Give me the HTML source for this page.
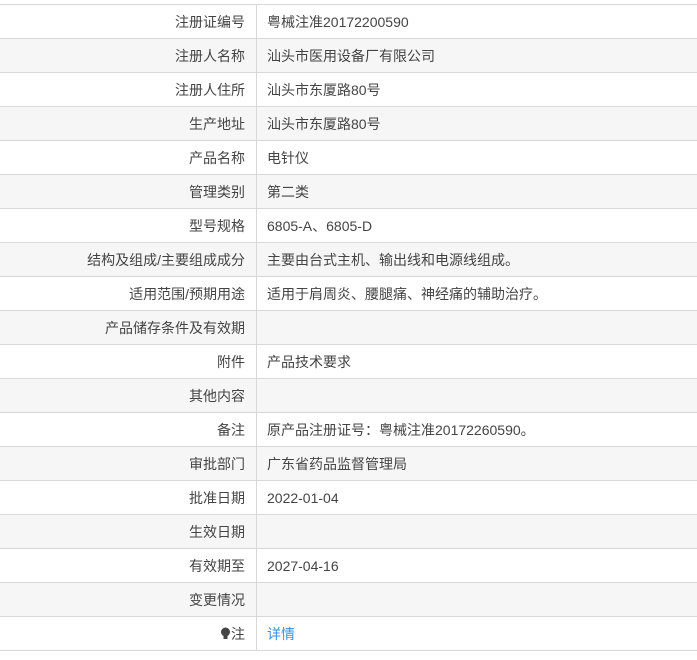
<!DOCTYPE html><html><head><meta charset="utf-8"><style>
body{margin:0;width:697px;height:660px;background:#fff;overflow:hidden;font-family:"Liberation Sans","Noto Sans CJK SC",sans-serif;font-size:14px;color:#444}
.r{position:absolute;left:0;width:697px;height:33px;border-top:1px solid #d8d8d8;line-height:35px}
.r.g{background:#f6f6f6}
.l{position:absolute;left:0;width:245px;text-align:right}
.v{position:absolute;left:267px}
.s{position:absolute;left:256px;top:0;width:1px;height:33px;background:#d8d8d8}
a{color:#3a8ee6;text-decoration:none}
</style></head><body>
<div class="r" style="top:4px"><div class="s"></div><div class="l">注册证编号</div><div class="v">粤械注准20172200590</div></div>
<div class="r g" style="top:38px"><div class="s"></div><div class="l">注册人名称</div><div class="v">汕头市医用设备厂有限公司</div></div>
<div class="r" style="top:72px"><div class="s"></div><div class="l">注册人住所</div><div class="v">汕头市东厦路80号</div></div>
<div class="r g" style="top:106px"><div class="s"></div><div class="l">生产地址</div><div class="v">汕头市东厦路80号</div></div>
<div class="r" style="top:140px"><div class="s"></div><div class="l">产品名称</div><div class="v">电针仪</div></div>
<div class="r g" style="top:174px"><div class="s"></div><div class="l">管理类别</div><div class="v">第二类</div></div>
<div class="r" style="top:208px"><div class="s"></div><div class="l">型号规格</div><div class="v">6805-A、6805-D</div></div>
<div class="r g" style="top:242px"><div class="s"></div><div class="l">结构及组成/主要组成成分</div><div class="v">主要由台式主机、输出线和电源线组成。</div></div>
<div class="r" style="top:276px"><div class="s"></div><div class="l">适用范围/预期用途</div><div class="v">适用于肩周炎、腰腿痛、神经痛的辅助治疗。</div></div>
<div class="r g" style="top:310px"><div class="s"></div><div class="l">产品储存条件及有效期</div><div class="v"></div></div>
<div class="r" style="top:344px"><div class="s"></div><div class="l">附件</div><div class="v">产品技术要求</div></div>
<div class="r g" style="top:378px"><div class="s"></div><div class="l">其他内容</div><div class="v"></div></div>
<div class="r" style="top:412px"><div class="s"></div><div class="l">备注</div><div class="v">原产品注册证号：粤械注准20172260590。</div></div>
<div class="r g" style="top:446px"><div class="s"></div><div class="l">审批部门</div><div class="v">广东省药品监督管理局</div></div>
<div class="r" style="top:480px"><div class="s"></div><div class="l">批准日期</div><div class="v">2022-01-04</div></div>
<div class="r g" style="top:514px"><div class="s"></div><div class="l">生效日期</div><div class="v"></div></div>
<div class="r" style="top:548px"><div class="s"></div><div class="l">有效期至</div><div class="v">2027-04-16</div></div>
<div class="r g" style="top:582px"><div class="s"></div><div class="l">变更情况</div><div class="v"></div></div>
<div class="r" style="top:616px;border-bottom:1px solid #d8d8d8"><div class="s"></div><div class="l"><svg width="11" height="13" viewBox="0 0 11 13" style="vertical-align:-1px"><circle cx="5.5" cy="5" r="4.5" fill="#444"/><rect x="3.5" y="9" width="4" height="3" fill="#444"/></svg>注</div><div class="v"><a>详情</a></div></div>
</body></html>
